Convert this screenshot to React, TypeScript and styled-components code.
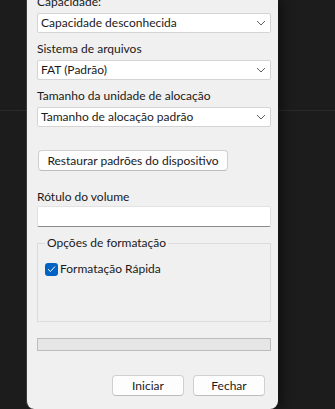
import React from "react";
import styled, { createGlobalStyle } from "styled-components";

const Global = createGlobalStyle`
  html, body { margin: 0; padding: 0; background: #1c1c1c; }
  body { font-family: "Segoe UI", Lato, "Noto Sans", sans-serif; font-size: 12px; color: #1a1a1a; }
`;

const Page = styled.div`
  height: 409px;
  overflow: hidden;
  display: flex;
  background:
    linear-gradient(#2b2b2b, #2b2b2b) 0 110px / 100% 1px no-repeat,
    #1c1c1c;
`;

const Dialog = styled.div`
  margin-left: 26px;
  width: 252px;
  height: 409px;
  box-sizing: border-box;
  background: #f0f0f0;
  border-radius: 0 0 8px 8px;
  border-left: 1px solid #3a3a3a;
  box-shadow: 6px 0 10px rgba(0, 0, 0, 0.35);
  padding: 0 7px 0 10px;
  display: flex;
  flex-direction: column;
`;

const Label = styled.div<{ $top: number }>`
  line-height: 16px;
  height: 16px;
  margin-top: ${(p) => p.$top}px;
  white-space: nowrap;
`;

const SelectBox = styled.div<{ $gap?: number }>`
  margin-top: ${(p) => p.$gap ?? 3}px;
  height: 20px;
  box-sizing: border-box;
  background: #fff;
  border: 1px solid #d4d4d4;
  border-radius: 2px;
  display: flex;
  align-items: center;
  justify-content: space-between;
  padding: 0 4px 0 3px;
  line-height: 16px;
`;

const Chevron = () => (
  <svg width="10" height="6" viewBox="0 0 10 6">
    <path d="M1 1 L5 5 L9 1" fill="none" stroke="#606060" strokeWidth="1" />
  </svg>
);

const Select = ({ value, gap }: { value: string; gap?: number }) => (
  <SelectBox $gap={gap}>
    <span>{value}</span>
    <Chevron />
  </SelectBox>
);

const PushButton = styled.button<{ $width: number }>`
  font: inherit;
  color: #1a1a1a;
  width: ${(p) => p.$width}px;
  height: 21px;
  padding: 0;
  background: #fdfdfd;
  border: 1px solid #d0d0d0;
  border-bottom-color: #bdbdbd;
  border-radius: 4px;
  line-height: 16px;
  white-space: nowrap;
`;

const RestoreRow = styled.div`
  margin-top: 23px;
  padding-left: 1px;
  display: flex;
`;

const TextInput = styled.div`
  margin-top: 1px;
  height: 21px;
  box-sizing: border-box;
  background: #fff;
  border: 1px solid #e2e2e2;
  border-bottom: 1px solid #8a8a8a;
  border-radius: 2px;
`;

const Group = styled.fieldset`
  margin: 8px 0 0;
  padding: 0 0 0 7px;
  height: 87px;
  box-sizing: border-box;
  border: 1px solid #dcdcdc;
  min-width: 0;
`;

const Legend = styled.legend`
  padding: 0 2px;
  margin-left: 0;
  line-height: 16px;
`;

const CheckRow = styled.label`
  display: flex;
  align-items: center;
  gap: 2px;
  margin-top: 10px;
  line-height: 16px;
`;

const CheckBox = styled.span`
  width: 13px;
  height: 13px;
  border-radius: 3px;
  background: #0063c4;
  display: inline-flex;
  align-items: center;
  justify-content: center;
`;

const Progress = styled.div`
  margin-top: 16px;
  height: 13px;
  box-sizing: border-box;
  background: #e6e6e6;
  border: 1px solid #bcbcbc;
`;

const Footer = styled.div`
  margin-top: 24px;
  display: flex;
  justify-content: flex-end;
  gap: 9px;
  padding-right: 6px;
`;

export default function App() {
  return (
    <>
      <Global />
      <Page>
        <Dialog>
          <Label $top={-6}>Capacidade:</Label>
          <Select value="Capacidade desconhecida" />
          <Label $top={8}>Sistema de arquivos</Label>
          <Select value="FAT (Padrão)" />
          <Label $top={8}>Tamanho da unidade de alocação</Label>
          <Select value="Tamanho de alocação padrão" />
          <RestoreRow>
            <PushButton $width={190}>Restaurar padrões do dispositivo</PushButton>
          </RestoreRow>
          <Label $top={18}>Rótulo do volume</Label>
          <TextInput />
          <Group>
            <Legend>Opções de formatação</Legend>
            <CheckRow>
              <CheckBox>
                <svg width="9" height="8" viewBox="0 0 9 8">
                  <path d="M1 4.2 L3.4 6.5 L8 1.5" fill="none" stroke="#fff" strokeWidth="1" />
                </svg>
              </CheckBox>
              <span>Formatação Rápida</span>
            </CheckRow>
          </Group>
          <Progress />
          <Footer>
            <PushButton $width={72}>Iniciar</PushButton>
            <PushButton $width={72}>Fechar</PushButton>
          </Footer>
        </Dialog>
      </Page>
    </>
  );
}
